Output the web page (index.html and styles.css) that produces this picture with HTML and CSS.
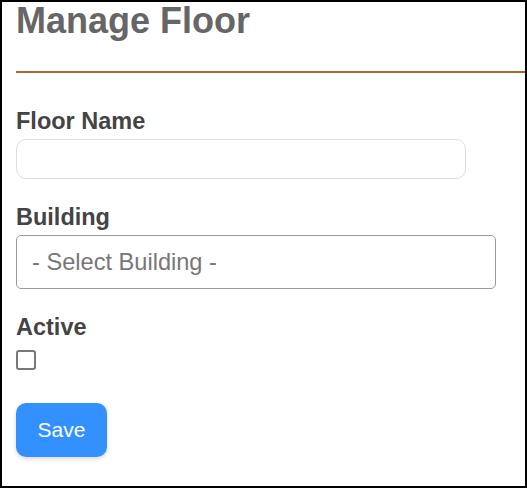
FILE: index.html
```html
<!DOCTYPE html>
<html lang="en">
<head>
    <meta charset="UTF-8">
    <meta name="viewport" content="width=device-width, initial-scale=1.0">
    <title>Manage Floor</title>
    <link rel="stylesheet" href="styles.css">
</head>
<body>
    <div class="page">
        <h1 class="page-title">Manage Floor</h1>
        <hr class="title-rule">

        <form class="floor-form">
            <div class="field">
                <label class="field-label" for="floor-name">Floor Name</label>
                <input class="text-input" type="text" id="floor-name">
            </div>

            <div class="field">
                <label class="field-label" for="building">Building</label>
                <select class="select-input" id="building">
                    <option>- Select Building -</option>
                </select>
            </div>

            <div class="field">
                <label class="field-label" for="active">Active</label>
                <input class="check-input" type="checkbox" id="active">
            </div>

            <button type="button" class="btn-save">Save</button>
        </form>
    </div>
</body>
</html>
```

FILE: styles.css
```css
* {
    margin: 0;
    padding: 0;
    box-sizing: border-box;
}

html, body {
    height: 100%;
}

body {
    font-family: "Liberation Sans", Arial, sans-serif;
    background: #fff;
    overflow: hidden;
}

.page {
    height: 100%;
    border: 2px solid #000;
    padding-left: 14px;
}

.page-title {
    font-size: 36px;
    line-height: 37px;
    font-weight: 700;
    color: #666;
}

.title-rule {
    border: none;
    border-top: 2px solid #b5612e;
    margin-top: 32px;
}

.floor-form {
    padding-top: 35px;
}

.field {
    margin-bottom: 25px;
}

.field:last-of-type {
    margin-bottom: 33px;
}

.field-label {
    display: block;
    font-size: 23.5px;
    line-height: 26px;
    font-weight: 700;
    color: #444;
    margin-bottom: 5px;
}

.text-input {
    display: block;
    width: 450px;
    height: 40px;
    border: 1px solid #ddd;
    border-radius: 10px;
    padding: 0 12px;
    font-family: inherit;
    font-size: 20px;
    outline: none;
}

.select-input {
    display: block;
    width: 480px;
    height: 54px;
    border: 1px solid #9a9a9a;
    border-radius: 5px;
    padding: 0 15px;
    font-family: inherit;
    font-size: 23.6px;
    color: #777;
    background: #fff;
    appearance: none;
    -webkit-appearance: none;
    outline: none;
}

.check-input {
    display: block;
    width: 20px;
    height: 20px;
    margin-top: 10px;
    border: 2px solid #777;
    border-radius: 3px;
    background: #fff;
    appearance: none;
    -webkit-appearance: none;
}

.btn-save {
    display: block;
    width: 91px;
    height: 54px;
    border: none;
    border-radius: 10px;
    background: #3391ff;
    color: #fff;
    font-family: inherit;
    font-size: 21px;
    box-shadow: 0 2px 4px rgba(0, 0, 0, 0.15);
    cursor: pointer;
}
```
